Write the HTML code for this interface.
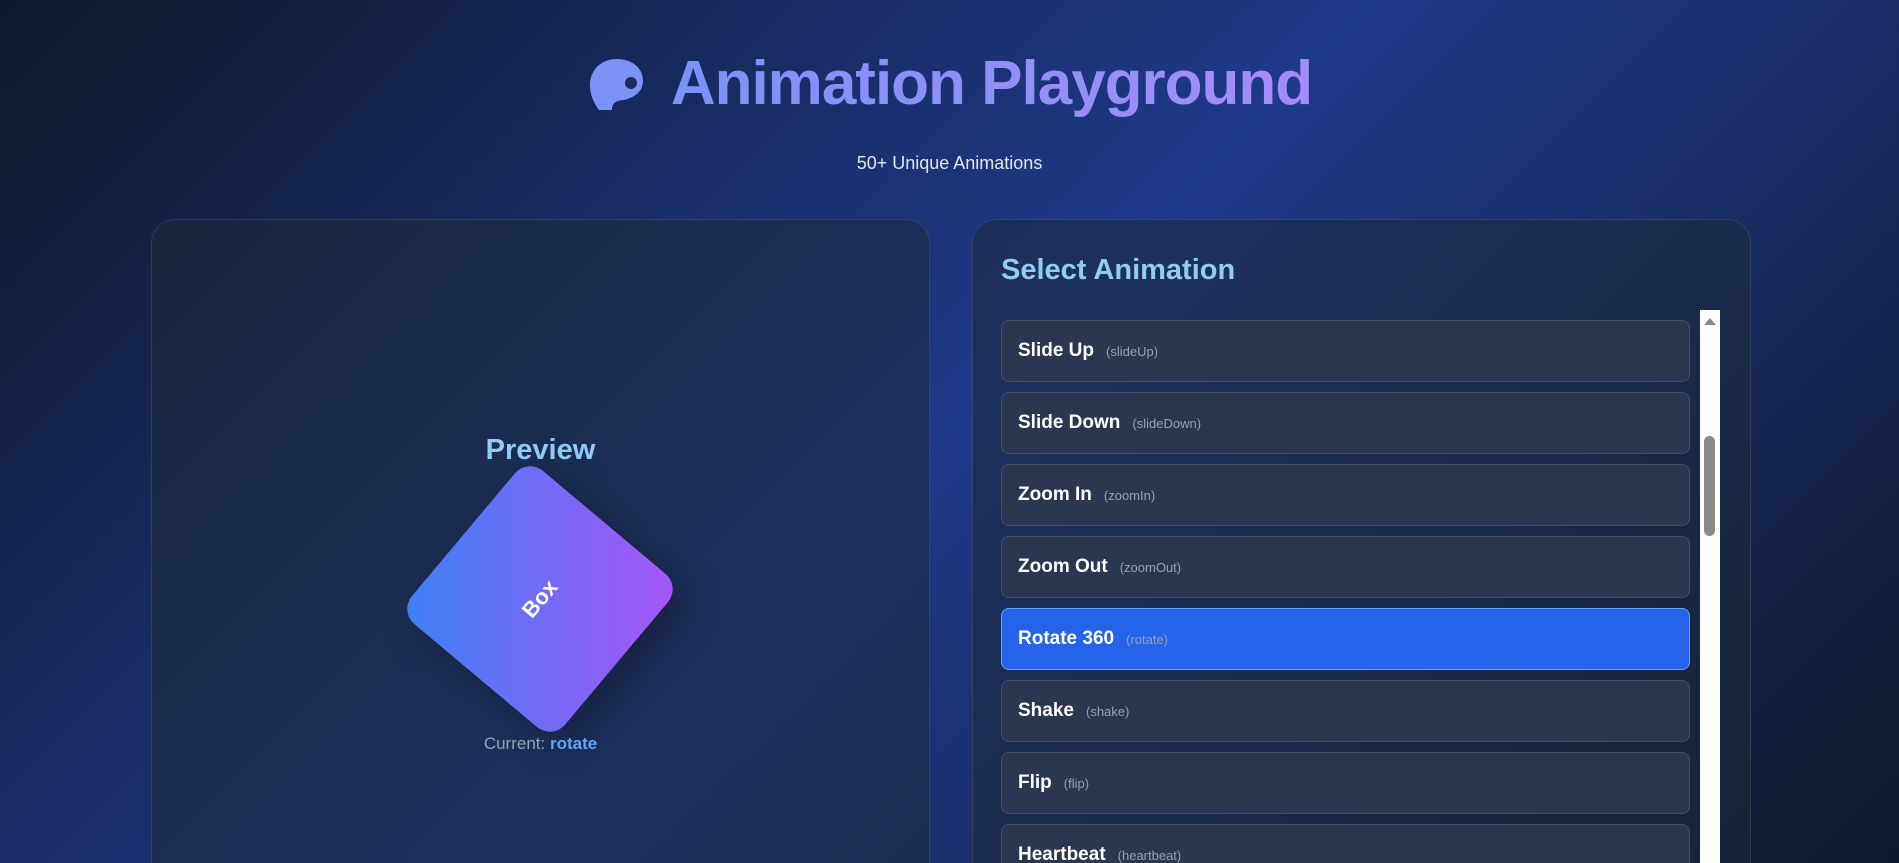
<!DOCTYPE html>
<html><head><meta charset="utf-8"><style>
*{margin:0;padding:0;box-sizing:border-box}
html,body{width:1899px;height:863px;overflow:hidden}
body{font-family:"Liberation Sans",sans-serif;background:linear-gradient(135deg,#0f172a 0%,#1e3a8a 50%,#0f172a 100%);position:relative;color:#fff}
.title{position:absolute;top:44px;left:0;width:1899px;text-align:center;font-size:62px;font-weight:bold;letter-spacing:-1px;height:80px;white-space:nowrap}
.title span.t{background:linear-gradient(90deg,#7b93f7,#a78bfa);-webkit-background-clip:text;background-clip:text;color:transparent;margin-left:22px;vertical-align:middle}
.title svg{vertical-align:middle}
.sub{position:absolute;top:153px;width:1899px;text-align:center;font-size:18px;color:#e2e8f0}
.card{position:absolute;top:219px;height:644px;border-radius:24px 24px 0 0;background:rgba(30,41,59,0.55);border:1px solid rgba(255,255,255,0.1);border-bottom:none}
.l{left:151px;width:779px}
.r{left:972px;width:779px}
.prev{position:absolute;left:151px;width:779px;top:434px;text-align:center;font-size:29px;font-weight:bold;color:#90cdf4}
.box{position:absolute;left:440px;top:499px;width:200px;height:200px;border-radius:20px;transform:rotate(-50deg);background:linear-gradient(140deg,#3b82f6,#a855f7);box-shadow:0 20px 40px rgba(0,0,0,0.3);display:flex;align-items:center;justify-content:center;font-weight:bold;font-size:22px}
.cur{position:absolute;left:151px;width:779px;top:734px;text-align:center;font-size:17px;color:#94a3b8}
.cur b{color:#60a5fa}
.sel{position:absolute;left:1001px;top:254px;font-size:29px;font-weight:bold;color:#90cdf4}
.item{position:absolute;left:1001px;width:689px;height:62px;border-radius:8px;background:#2b3650;border:1px solid rgba(255,255,255,0.12);padding-left:16px;display:flex;align-items:center;font-size:19px;font-weight:bold;white-space:nowrap}
.item small{font-size:13px;font-weight:normal;color:#94a3b8;margin-left:12px}
.item.on{background:#2563eb;border-color:#60a5fa}
.sb{position:absolute;left:1700px;top:310px;width:20px;height:560px;background:#fff}
.thumb{position:absolute;left:1704px;top:436px;width:11px;height:100px;border-radius:6px;background:#8a8a8a}
</style></head><body>
<div class="title"><svg width="62" height="56" viewBox="0 0 62 56"><path d="M30 3C14 3 3 14 3 29c0 13 7 22 9 25c3 0 11 0 13 0c0-5 2-8 6-9c4-1 8-1 12-3c8-3 13-9 13-17C56 12 45 3 30 3z" fill="#7b93f7"/><circle cx="44" cy="27" r="6" fill="#1c2a5e"/></svg><span class="t">Animation Playground</span></div>
<div class="sub">50+ Unique Animations</div>
<div class="card l"></div>
<div class="card r"></div>
<div class="prev">Preview</div>
<div class="box"><span>Box</span></div>
<div class="cur">Current: <b>rotate</b></div>
<div class="sel">Select Animation</div>
<div class="item" style="top:320px">Slide Up<small>(slideUp)</small></div>
<div class="item" style="top:392px">Slide Down<small>(slideDown)</small></div>
<div class="item" style="top:464px">Zoom In<small>(zoomIn)</small></div>
<div class="item" style="top:536px">Zoom Out<small>(zoomOut)</small></div>
<div class="item on" style="top:608px">Rotate 360<small>(rotate)</small></div>
<div class="item" style="top:680px">Shake<small>(shake)</small></div>
<div class="item" style="top:752px">Flip<small>(flip)</small></div>
<div class="item" style="top:824px">Heartbeat<small>(heartbeat)</small></div>
<div class="sb"><svg width="20" height="14" style="position:absolute;top:4px;left:0"><path d="M4 11L10 4L16 11Z" fill="#8a8a8a"/></svg></div>
<div class="thumb"></div>
</body></html>
